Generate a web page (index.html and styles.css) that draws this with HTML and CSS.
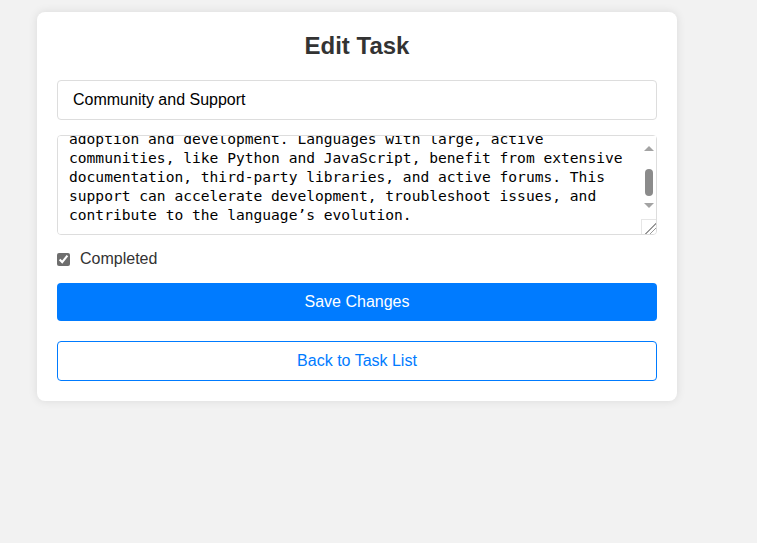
FILE: index.html
```html
<!DOCTYPE html>
<html lang="en">
<head>
<meta charset="utf-8">
<title>Edit Task</title>
<link rel="stylesheet" href="styles.css">
</head>
<body>
<div class="card">
  <h2 class="title">Edit Task</h2>
  <form class="form">
    <input class="field" type="text" value="Community and Support">
    <div class="area-wrap">
      <textarea class="area" id="desc">Community and support are vital to a programming language's
success. A strong, engaged community creates tutorials,
libraries, and tools that make learning easier, and it helps
newcomers find answers quickly. This collective knowledge
drives innovation and signals long-term stability, which
plays a key role in a language's
adoption and development. Languages with large, active
communities, like Python and JavaScript, benefit from extensive
documentation, third-party libraries, and active forums. This
support can accelerate development, troubleshoot issues, and
contribute to the language’s evolution.</textarea>
      <div class="sbar" aria-hidden="true">
        <span class="sb-btn"><span class="tri-up"></span></span>
        <span class="sb-thumb"></span>
        <span class="sb-btn sb-btn-down"><span class="tri-down"></span></span>
      </div>
      <span class="grip" aria-hidden="true"></span>
    </div>
    <label class="check"><input type="checkbox" checked> Completed</label>
    <button class="save" type="button">Save Changes</button>
  </form>
  <a class="back" href="#">Back to Task List</a>
</div>
<script src="script.js"></script>
</body>
</html>
```

FILE: styles.css
```css
* { box-sizing: border-box; }
body {
  margin: 0;
  padding: 12px 37px;
  background: #f2f2f2;
  font-family: "Liberation Sans", Arial, sans-serif;
  color: #333;
}
.card {
  width: 640px;
  padding: 20px;
  background: #fff;
  border-radius: 8px;
  box-shadow: 0 0 10px rgba(0, 0, 0, 0.1);
}
.title {
  margin: 0 0 20px;
  font-size: 24px;
  line-height: 28px;
  text-align: center;
  color: #333;
}
.form { display: flex; flex-direction: column; }
.field {
  display: block;
  width: 100%;
  height: 40px;
  margin: 0 0 15px;
  padding: 0 15px;
  border: 1px solid #ddd;
  border-radius: 4px;
  font-family: "Liberation Sans", Arial, sans-serif;
  font-size: 16px;
  color: #000;
}
.area-wrap {
  position: relative;
  height: 100px;
  margin: 0 0 15px;
}
.area {
  display: block;
  width: 100%;
  height: 100px;
  margin: 0;
  padding: 10px 26px 10px 11px;
  border: 1px solid #ddd;
  border-radius: 4px;
  font-family: "DejaVu Sans Mono", monospace;
  font-size: 14.6px;
  line-height: 19px;
  color: #000;
  resize: none;
  overflow-y: scroll;
  scrollbar-width: none;
}
.sbar {
  position: absolute;
  top: 1px;
  right: 1px;
  width: 15px;
  height: 83px;
  display: flex;
  flex-direction: column;
  align-items: center;
  background: #fff;
  pointer-events: none;
}
.sb-btn {
  display: flex;
  align-items: center;
  justify-content: center;
  width: 15px;
  height: 24px;
}
.sb-btn-down { height: 18px; }
.tri-up {
  width: 0;
  height: 0;
  border-left: 5px solid transparent;
  border-right: 5px solid transparent;
  border-bottom: 5px solid #a3a3a3;
}
.tri-down {
  width: 0;
  height: 0;
  border-left: 5px solid transparent;
  border-right: 5px solid transparent;
  border-top: 5px solid #a3a3a3;
}
.sb-thumb {
  width: 8px;
  height: 27px;
  margin-top: 9px;
  border-radius: 4px;
  background: #8b8b8b;
}
.grip {
  position: absolute;
  right: 1px;
  bottom: 1px;
  width: 15px;
  height: 15px;
  border-top: 1px solid #e6e6e6;
  border-left: 1px solid #e6e6e6;
  background: linear-gradient(135deg, transparent 0 60%, #9a9a9a 60% 65%, transparent 65% 76%, #9a9a9a 76% 81%, transparent 81%);
  pointer-events: none;
}
.check {
  display: flex;
  align-items: center;
  gap: 6px;
  height: 18px;
  margin: 0 0 15px;
  font-size: 16px;
  color: #333;
}
.check input {
  width: 13px;
  height: 13px;
  margin: 0 4px 0 0;
  accent-color: #6e6e6e;
}
.save {
  display: block;
  width: 100%;
  height: 38px;
  margin: 0;
  border: 0;
  border-radius: 4px;
  background: #007bff;
  color: #fff;
  font-family: "Liberation Sans", Arial, sans-serif;
  font-size: 16px;
}
.back {
  display: flex;
  align-items: center;
  justify-content: center;
  height: 40px;
  margin-top: 20px;
  border: 1px solid #007bff;
  border-radius: 4px;
  color: #007bff;
  text-decoration: none;
  font-size: 16px;
}
```

FILE: script.js
```js
var t = document.getElementById('desc');
t.scrollTop = t.scrollHeight;
```
